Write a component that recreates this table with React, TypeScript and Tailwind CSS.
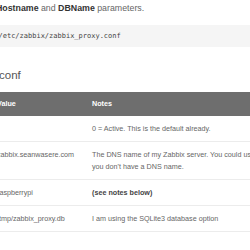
export default function App() {
  const rows = [
    { value: "1", notes: ["0 = Active. This is the default already."] },
    {
      value: "zabbix.seanwasere.com",
      notes: [
        "The DNS name of my Zabbix server. You could use the IP address if",
        "you don't have a DNS name.",
      ],
    },
    { value: "raspberrypi", notes: ["(see notes below)"], bold: true },
    { value: "/tmp/zabbix_proxy.db", notes: ["I am using the SQLite3 database option"] },
  ];

  return (
    <div className="w-[250px] h-[250px] overflow-hidden bg-white font-['Liberation_Sans',Arial,sans-serif]">
      <div className="ml-[-12px] w-[300px]">
        <p className="pt-[1px] pl-[8px] text-[8.8px] leading-[14px] text-[#666] whitespace-nowrap">
          <b className="text-[#333]">Hostname</b> and <b className="text-[#333]">DBName</b> parameters.
        </p>

        <div className="mt-[10px] h-[22px] flex items-center pl-[10.5px] bg-[#f5f5f5] text-[7px] text-[#444] font-['DejaVu_Sans_Mono',monospace] whitespace-nowrap">
          /etc/zabbix/zabbix_proxy.conf
        </div>

        <h3 className="mt-[20px] pl-[11px] text-[11.5px] leading-[16px] text-[#555] font-normal">conf</h3>

        <div className="mt-[9px] text-[7.2px] text-[#666]">
          <div className="grid grid-cols-[95px_1fr] h-[24px] items-center bg-[#6e6e6e] text-white font-bold">
            <div className="pl-[9px]">Value</div>
            <div className="pl-[9px]">Notes</div>
          </div>
          {rows.map((r, i) => (
            <div
              key={i}
              className={
                "grid grid-cols-[95px_1fr] leading-[12px] py-[6.5px] border-[#ececec] " +
                (i > 0 ? "border-t " : "") +
                (i === rows.length - 1 ? "border-b" : "")
              }
            >
              <div className="pl-[9px] whitespace-nowrap">{i === 0 ? "" : r.value}</div>
              <div className={"pl-[9px] whitespace-nowrap " + (r.bold ? "font-bold text-[#444]" : "")}>
                {r.notes.map((n, j) => (
                  <div key={j}>{n}</div>
                ))}
              </div>
            </div>
          ))}
        </div>
      </div>
    </div>
  );
}
